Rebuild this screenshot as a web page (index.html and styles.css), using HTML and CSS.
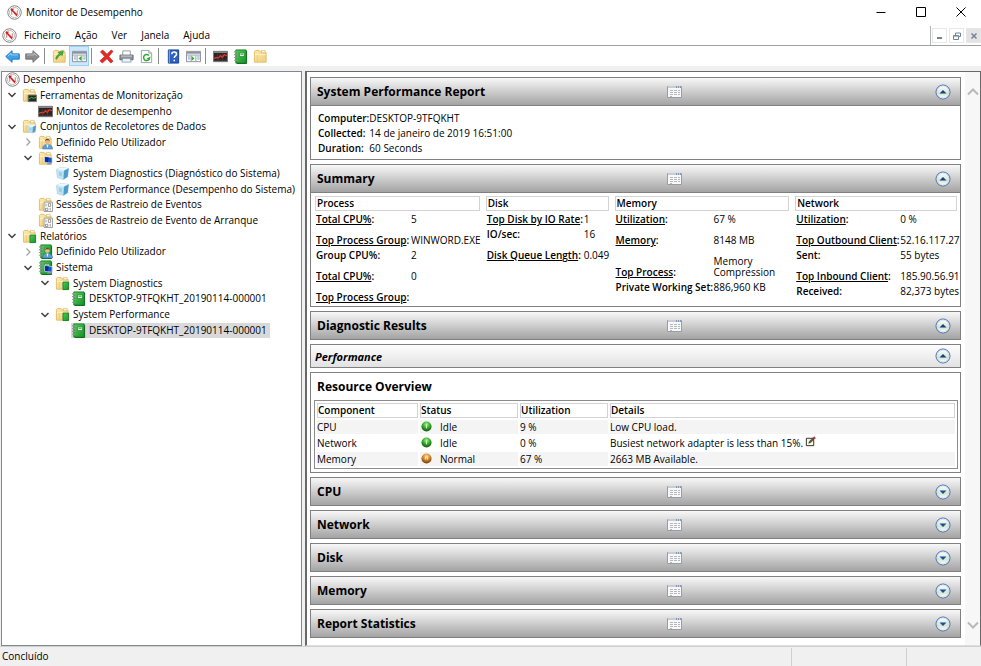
FILE: index.html
```html
<!DOCTYPE html>
<html lang="pt">

<head>
  <meta charset="UTF-8">
  <meta name="viewport" content="width=device-width, initial-scale=1.0">
  <title>Monitor de Desempenho</title>
  <link rel="stylesheet" href="styles.css">
</head>

<body>
  <svg class="defs" aria-hidden="true">
    <defs>
      <linearGradient id="gFolder" x1="0" y1="0" x2="1" y2="1">
        <stop offset="0" stop-color="#fdebb0" />
        <stop offset="1" stop-color="#f0cd78" />
      </linearGradient>
      <linearGradient id="gGreen" x1="0" y1="0" x2="1" y2="1">
        <stop offset="0" stop-color="#55c95c" />
        <stop offset="1" stop-color="#149428" />
      </linearGradient>
      <linearGradient id="gRound" x1="0" y1="0" x2="0" y2="1">
        <stop offset="0" stop-color="#ffffff" />
        <stop offset="0.6" stop-color="#d5e6cd" />
        <stop offset="1" stop-color="#ffffff" />
      </linearGradient>
      <radialGradient id="gIdle" cx="0.5" cy="0.3" r="0.7">
        <stop offset="0" stop-color="#a8f59a" />
        <stop offset="0.5" stop-color="#2fae28" />
        <stop offset="1" stop-color="#144f12" />
      </radialGradient>
      <radialGradient id="gNormal" cx="0.5" cy="0.3" r="0.7">
        <stop offset="0" stop-color="#ffe0a0" />
        <stop offset="0.5" stop-color="#d98427" />
        <stop offset="1" stop-color="#6b3508" />
      </radialGradient>
    </defs>
    <symbol id="perf" viewBox="0 0 16 16">
      <circle cx="8" cy="8" r="7.200" fill="#fff" stroke="#6f6f6f" stroke-width="0.9" />
      <circle cx="8" cy="8" r="5.400" fill="#fff" stroke="#a5a5a5" stroke-width="0.8" />
      <path d="M5 5.500v5M11 10V5.500" fill="none" stroke="#e08a8a" stroke-width="1.200" />
      <path d="M5 4l6.500 6.500-1.500 1.500L5 6z" fill="#d92020" />
      <path d="M4 3.800l3.800.2L4.500 7z" fill="#d92020" />
    </symbol>
    <symbol id="folder" viewBox="0 0 16 16">
      <path d="M1.500 14V2.500l1-1h4l1 1.500h5.500l1 1V14z" fill="url(#gFolder)" stroke="#e0bc68" />
      <path d="M9 1.500h4v2.500H9z" fill="#fff8dc" stroke="#cfae62" stroke-width="0.6" />
      <path d="M2 6h11.500" stroke="#fff4cc" />
      <path d="M4.500 6.500v7" stroke="#e6c06a" stroke-width="0.7" />
    </symbol>
    <symbol id="monitor" viewBox="0 0 16 16">
      <path d="M0.500 2.500h15v11h-15z" fill="#2b2525" stroke="#777" />
      <path d="M1 3.500h14" stroke="#a9a9a9" />
      <path d="M1 10l3-1 2 .5L8 7l2 2 2-3 3 1" fill="none" stroke="#e83a2c" stroke-width="1.300" />
      <path d="M1 12h14M5 5v8M10 5v8" stroke="#6a4444" stroke-width="0.5" />
    </symbol>
    <symbol id="book" viewBox="0 0 16 16">
      <path d="M3 1h11v14H3z" fill="url(#gGreen)" stroke="#168325" />
      <path d="M14.500 2v13.500H4" fill="none" stroke="#0d651a" />
      <path d="M7 4h5v4H7z" fill="#e5f8df" stroke="#198228" stroke-width="0.7" />
      <path d="M8 5.500h3" stroke="#178027" />
      <path d="M1 3h4M1 6h4M1 9h4M1 12h4" stroke="#8f9a90" stroke-width="1.200" />
    </symbol>
    <symbol id="cube" viewBox="0 0 16 16">
      <path d="M1.500 3.500L6 1.500l8.500 1-1 9-4.500 3-6.500-2z" fill="#c4e4f3" stroke="#9fcbe0" stroke-width="0.6" />
      <path d="M1.500 3.500L6 1.500l8.500 1L9.500 5z" fill="#eef8fc" />
      <path d="M9.500 5l5-2.500-1 9-4.500 3z" fill="#4b9dcb" />
      <path d="M4 6l3.500.6v4.600L4.500 10.500z" fill="#9ccfe8" />
    </symbol>
    <symbol id="user" viewBox="0 0 16 16">
      <circle cx="10" cy="7" r="2.600" fill="#eab78a" />
      <path d="M7.500 7c-.5-4 5.500-4 5 0l-1-1.500H8.500z" fill="#6d4426" />
      <path d="M5 15c0-4 2.500-5 5-5s5.500 1 5.500 5z" fill="#5d9fd8" stroke="#2e6ca8" stroke-width="0.5" />
      <path d="M9 10l1 4 1.200-4z" fill="#fff" />
    </symbol>
    <symbol id="screen" viewBox="0 0 16 16">
      <path d="M7 6l8 1v6l-8-1z" fill="#1653cc" stroke="#c9d6e6" stroke-width="0.8" />
      <path d="M7.500 6.500l4 .5-1 5-3-.5z" fill="#0a2b97" />
      <path d="M9 14.500h6l-2-2h-2z" fill="#8a9bb0" />
    </symbol>
    <symbol id="sheet" viewBox="0 0 16 16">
      <path d="M6.500 5.500h9v10h-9z" fill="#fff" stroke="#9a9a9a" />
      <path d="M8.500 7v3M11 7h2.500v3H11zM8 12h2.500v2.500H8zM13 11.500v3" fill="none" stroke="#777" stroke-width="0.8" />
    </symbol>
    <symbol id="f-monitor" viewBox="0 0 16 16">
      <use href="#folder" />
      <path d="M6.500 7.500h9v7h-9z" fill="#232b23" stroke="#777" />
      <path d="M7 12l3-2 2 1 3-1" fill="none" stroke="#41c147" />
    </symbol>
    <symbol id="f-cube" viewBox="0 0 16 16">
      <use href="#folder" />
      <use href="#cube" x="5" y="5" width="11" height="11" />
    </symbol>
    <symbol id="f-user" viewBox="0 0 16 16">
      <use href="#folder" />
      <use href="#user" />
    </symbol>
    <symbol id="f-screen" viewBox="0 0 16 16">
      <use href="#folder" />
      <use href="#screen" />
    </symbol>
    <symbol id="f-sheet" viewBox="0 0 16 16">
      <use href="#folder" />
      <use href="#sheet" />
    </symbol>
    <symbol id="f-book" viewBox="0 0 16 16">
      <use href="#folder" />
      <path d="M8.500 6.500h6v8h-6z" fill="url(#gGreen)" stroke="#168325" />
    </symbol>
    <symbol id="b-user" viewBox="0 0 16 16">
      <use href="#book" />
      <use href="#user" />
    </symbol>
    <symbol id="b-screen" viewBox="0 0 16 16">
      <use href="#book" />
      <use href="#screen" />
    </symbol>
    <symbol id="arrow" viewBox="0 0 16 16">
      <path d="M0.800 8l6.700-6.200v3.400h7.700v5.600H7.500v3.400z" stroke-linejoin="round" />
      <path d="M3 7.500l3.500-3v1.800H14" fill="none" stroke="#fff" stroke-opacity="0.5" />
    </symbol>
    <symbol id="up" viewBox="0 0 16 16">
      <use href="#folder" />
      <path d="M4 10c1-3 2-4 4-5L6.500 3.500 12 2l-1 5-1.500-1C7.500 7 6 9 5 11z" fill="#3fb53d" stroke="#247e25" stroke-width="0.6" />
    </symbol>
    <symbol id="panel" viewBox="0 0 16 16">
      <path d="M0.500 2.500h15v11h-15z" fill="#f7f9fb" stroke="#8a8f96" />
      <path d="M1 4h14" stroke="#8a939f" stroke-width="2" />
      <path d="M1 6.500h14M5.500 7v6M10.500 7v6" stroke="#9da3aa" />
      <path d="M2 8.500h2.500M2 10.500h2.500M12 8.500h2.500M12 10.500h2.500" stroke="#7ba2c9" />
    </symbol>
    <symbol id="delete" viewBox="0 0 16 16">
      <path d="M1.500 3L4 1l4.500 4.500L13 1l2 1.500L10.500 8l4.500 5-2.500 2-4-4.500-5 4.500L1 12.500 6 8z" fill="#df2c25" stroke="#b51712" stroke-width="0.6" />
    </symbol>
    <symbol id="print" viewBox="0 0 16 16">
      <path d="M4 2h8v5H4z" fill="#fff" stroke="#999" />
      <path d="M1 6.500h14v5H1z" fill="#8e949a" stroke="#61666b" />
      <path d="M2 7.500h12" stroke="#d7dadd" />
      <path d="M4 10h8l1 4H3z" fill="#e6f1fb" stroke="#7c8ea1" stroke-width="0.7" />
    </symbol>
    <symbol id="refresh" viewBox="0 0 16 16">
      <path d="M2.500 1.500h8l3 3v10h-11z" fill="#fff" stroke="#9aa0a6" />
      <path d="M10.500 1.500v3h3" fill="none" stroke="#9aa0a6" />
      <path d="M10.500 7a3.200 3.200 0 1 0 .5 3.500" fill="none" stroke="#2ea836" stroke-width="1.600" />
      <path d="M12.500 8l-1.300 4L8 10z" fill="#2ea836" />
    </symbol>
    <symbol id="help" viewBox="0 0 16 16">
      <path d="M2.500 1h11v14h-11z" fill="#2b62c4" stroke="#153b8c" />
      <path d="M3.500 1v14" stroke="#8fb4ef" />
      <path d="M6.200 5.500c0-3 5-3 5 0 0 2-2.400 1.800-2.400 4M8.800 11.500v1.500" fill="none" stroke="#fff" stroke-width="1.600" />
    </symbol>
    <symbol id="grid" viewBox="0 0 16 14">
      <path d="M1.500 1.500h14v11h-14z" fill="#f7f8fa" stroke="#989da3" />
      <path d="M2 2h13" stroke="#c8cdd4" stroke-width="2" />
      <path d="M10 2h1M12 2h1M14 2h1" stroke="#46628e" stroke-width="1" />
      <path d="M4 5.500h3M8 5.500h3M12 5.500h2M4 7.500h3M8 7.500h3M12 7.500h2M4 9.500h3M8 9.500h3M12 9.500h2M4 11.500h2" stroke="#b4b8bd" />
    </symbol>
    <symbol id="round-up" viewBox="0 0 16 16">
      <circle cx="8" cy="8" r="7" fill="url(#gRound)" stroke="#4668ac" />
      <circle cx="8" cy="8" r="6" fill="none" stroke="#c4daf5" stroke-width="0.8" />
      <path d="M4.500 9.500L8 6l3.500 3.500z" fill="#143f8c" />
    </symbol>
    <symbol id="round-down" viewBox="0 0 16 16">
      <circle cx="8" cy="8" r="7" fill="url(#gRound)" stroke="#4668ac" />
      <circle cx="8" cy="8" r="6" fill="none" stroke="#c4daf5" stroke-width="0.8" />
      <path d="M4.500 6.500L8 10l3.500-3.500z" fill="#174da5" />
    </symbol>
    <symbol id="open" viewBox="0 0 10 10">
      <path d="M1.500 3L5 6.500 8.500 3" fill="none" stroke="#404040" stroke-width="1.500" />
    </symbol>
    <symbol id="closed" viewBox="0 0 10 10">
      <path d="M3.500 1.500L7 5 3.500 8.500" fill="none" stroke="#a0a0a0" stroke-width="1.200" />
    </symbol>
    <symbol id="note" viewBox="0 0 12 12">
      <path d="M1.500 2.500h8v8h-8z" fill="#fffbd6" stroke="#222" />
      <path d="M4 8l1-2.500L10 .8l1.300 1.200L6.500 7z" fill="#555" stroke="#333" stroke-width="0.5" />
      <path d="M9.500 1.500L11 3" stroke="#e33" stroke-width="1.600" />
    </symbol>
  </svg>

  <div class="window">
    <header class="titlebar">
      <svg class="icon"><use href="#perf" /></svg>
      <h1>Monitor de Desempenho</h1>
      <div class="winbtns">
        <button type="button" aria-label="Minimizar"><svg viewBox="0 0 10 10"><path d="M0.500 5.500h9" /></svg></button>
        <button type="button" aria-label="Maximizar"><svg viewBox="0 0 10 10"><path d="M0.500 0.500h9v9h-9z" /></svg></button>
        <button type="button" aria-label="Fechar"><svg viewBox="0 0 10 10"><path d="M0.500 0.500l9 9M9.500 0.500l-9 9" /></svg></button>
      </div>
    </header>

    <nav class="menubar">
      <svg class="icon"><use href="#perf" /></svg>
      <button type="button">Ficheiro</button>
      <button type="button">Ação</button>
      <button type="button">Ver</button>
      <button type="button">Janela</button>
      <button type="button">Ajuda</button>
      <div class="childbtns">
        <button type="button" aria-label="Minimizar janela"><svg viewBox="0 0 8 8"><path d="M1 6h5" stroke-width="2" /></svg></button>
        <button type="button" aria-label="Restaurar janela"><svg viewBox="0 0 8 8"><path d="M2.500 3V1h5v3.500H6M0.500 3.500h5v4h-5zM0.500 4h5" /></svg></button>
        <button type="button" class="off" aria-label="Fechar janela"><svg viewBox="0 0 8 8"><path d="M1.500 1.500l5 5M6.500 1.500l-5 5" stroke-width="1.500" /></svg></button>
      </div>
    </nav>

    <div class="toolbar">
      <button type="button" aria-label="Retroceder"><svg class="icon back"><use href="#arrow" /></svg></button>
      <button type="button" aria-label="Avançar"><svg class="icon forward" viewBox="0 0 16 16"><use href="#arrow" transform="translate(16 0) scale(-1 1)" /></svg></button>
      <span class="sep"></span>
      <button type="button" aria-label="Subir um nível"><svg class="icon"><use href="#up" /></svg></button>
      <button type="button" class="pressed" aria-label="Mostrar árvore"><svg class="icon" viewBox="0 0 16 16"><use href="#panel" /><path d="M10 7.500v5L7 10z" fill="#2ea836" /></svg></button>
      <span class="sep"></span>
      <button type="button" aria-label="Eliminar"><svg class="icon"><use href="#delete" /></svg></button>
      <button type="button" aria-label="Imprimir"><svg class="icon"><use href="#print" /></svg></button>
      <button type="button" aria-label="Atualizar"><svg class="icon"><use href="#refresh" /></svg></button>
      <span class="sep"></span>
      <button type="button" aria-label="Ajuda"><svg class="icon"><use href="#help" /></svg></button>
      <button type="button" aria-label="Mostrar painel de ações"><svg class="icon" viewBox="0 0 16 16"><use href="#panel" /><path d="M6 7.500v5L9 10z" fill="#2ea836" /></svg></button>
      <span class="sep"></span>
      <button type="button" aria-label="Ver monitor"><svg class="icon"><use href="#monitor" /></svg></button>
      <button type="button" aria-label="Ver relatório"><svg class="icon"><use href="#book" /></svg></button>
      <button type="button" aria-label="Ver pasta"><svg class="icon"><use href="#folder" /></svg></button>
    </div>

    <div class="panes">
      <aside class="side">
        <ul class="tree">
          <li class="l0"><svg class="icon"><use href="#perf" /></svg><a href="#">Desempenho</a></li>
          <li class="l1"><button type="button" aria-label="Fechar ramo"><svg><use href="#open" /></svg></button><svg class="icon"><use href="#f-monitor" /></svg><a href="#">Ferramentas de Monitorização</a></li>
          <li class="l2 leaf"><svg class="icon"><use href="#monitor" /></svg><a href="#">Monitor de desempenho</a></li>
          <li class="l1"><button type="button" aria-label="Fechar ramo"><svg><use href="#open" /></svg></button><svg class="icon"><use href="#f-cube" /></svg><a href="#">Conjuntos de Recoletores de Dados</a></li>
          <li class="l2"><button type="button" aria-label="Abrir ramo"><svg><use href="#closed" /></svg></button><svg class="icon"><use href="#f-user" /></svg><a href="#">Definido Pelo Utilizador</a></li>
          <li class="l2"><button type="button" aria-label="Fechar ramo"><svg><use href="#open" /></svg></button><svg class="icon"><use href="#f-screen" /></svg><a href="#">Sistema</a></li>
          <li class="l3 leaf"><svg class="icon"><use href="#cube" /></svg><a href="#">System Diagnostics (Diagnóstico do Sistema)</a></li>
          <li class="l3 leaf"><svg class="icon"><use href="#cube" /></svg><a href="#">System Performance (Desempenho do Sistema)</a></li>
          <li class="l2 leaf"><svg class="icon"><use href="#f-sheet" /></svg><a href="#">Sessões de Rastreio de Eventos</a></li>
          <li class="l2 leaf"><svg class="icon"><use href="#f-sheet" /></svg><a href="#">Sessões de Rastreio de Evento de Arranque</a></li>
          <li class="l1"><button type="button" aria-label="Fechar ramo"><svg><use href="#open" /></svg></button><svg class="icon"><use href="#f-book" /></svg><a href="#">Relatórios</a></li>
          <li class="l2"><button type="button" aria-label="Abrir ramo"><svg><use href="#closed" /></svg></button><svg class="icon"><use href="#b-user" /></svg><a href="#">Definido Pelo Utilizador</a></li>
          <li class="l2"><button type="button" aria-label="Fechar ramo"><svg><use href="#open" /></svg></button><svg class="icon"><use href="#b-screen" /></svg><a href="#">Sistema</a></li>
          <li class="l3"><button type="button" aria-label="Fechar ramo"><svg><use href="#open" /></svg></button><svg class="icon"><use href="#f-book" /></svg><a href="#">System Diagnostics</a></li>
          <li class="l4 leaf"><svg class="icon"><use href="#book" /></svg><a href="#">DESKTOP-9TFQKHT_20190114-000001</a></li>
          <li class="l3"><button type="button" aria-label="Fechar ramo"><svg><use href="#open" /></svg></button><svg class="icon"><use href="#f-book" /></svg><a href="#">System Performance</a></li>
          <li class="l4 leaf active"><span><svg class="icon"><use href="#book" /></svg><a href="#">DESKTOP-9TFQKHT_20190114-000001</a></span></li>
        </ul>
      </aside>

      <main class="content">
        <div class="report">
          <section class="block">
            <div class="head">
              <h2>System Performance Report</h2>
              <button type="button" class="menu" aria-label="Menu"><svg><use href="#grid" /></svg></button>
              <button type="button" class="toggle" aria-label="Fechar"><svg><use href="#round-up" /></svg></button>
            </div>
            <table class="info">
              <tr><th>Computer:</th><td>DESKTOP-9TFQKHT</td></tr>
              <tr><th>Collected:</th><td>14 de janeiro de 2019 16:51:00</td></tr>
              <tr><th>Duration:</th><td>60 Seconds</td></tr>
            </table>
          </section>

          <section class="block">
            <div class="head">
              <h2>Summary</h2>
              <button type="button" class="menu" aria-label="Menu"><svg><use href="#grid" /></svg></button>
              <button type="button" class="toggle" aria-label="Fechar"><svg><use href="#round-up" /></svg></button>
            </div>
            <div class="summary">
              <div class="process">
                <h3>Process</h3>
                <table>
                  <tr><th><a href="#">Total CPU%</a>:</th><td>5</td></tr>
                  <tr class="group"><th><a href="#">Top Process Group</a>:</th><td>WINWORD.EXE</td></tr>
                  <tr><th>Group CPU%:</th><td>2</td></tr>
                  <tr class="group"><th><a href="#">Total CPU%</a>:</th><td>0</td></tr>
                  <tr class="group"><th><a href="#">Top Process Group</a>:</th><td></td></tr>
                </table>
              </div>
              <div class="disk">
                <h3>Disk</h3>
                <table>
                  <tr><th><a href="#">Top Disk by IO Rate</a>:</th><td>1</td></tr>
                  <tr><th>IO/sec:</th><td>16</td></tr>
                  <tr class="group"><th><a href="#">Disk Queue Length</a>:</th><td>0.049</td></tr>
                </table>
              </div>
              <div class="memory">
                <h3>Memory</h3>
                <table>
                  <tr><th><a href="#">Utilization</a>:</th><td>67 %</td></tr>
                  <tr class="group"><th><a href="#">Memory</a>:</th><td>8148 MB</td></tr>
                  <tr class="group"><th><a href="#">Top Process</a>:</th><td class="two">Memory<br>Compression</td></tr>
                  <tr><th>Private Working Set:</th><td>886,960 KB</td></tr>
                </table>
              </div>
              <div class="network">
                <h3>Network</h3>
                <table>
                  <tr><th><a href="#">Utilization</a>:</th><td>0 %</td></tr>
                  <tr class="group"><th><a href="#">Top Outbound Client</a>:</th><td>52.16.117.27</td></tr>
                  <tr><th>Sent:</th><td>55 bytes</td></tr>
                  <tr class="group"><th><a href="#">Top Inbound Client</a>:</th><td>185.90.56.91</td></tr>
                  <tr><th>Received:</th><td>82,373 bytes</td></tr>
                </table>
              </div>
            </div>
          </section>

          <section class="block">
            <div class="head">
              <h2>Diagnostic Results</h2>
              <button type="button" class="menu" aria-label="Menu"><svg><use href="#grid" /></svg></button>
              <button type="button" class="toggle" aria-label="Fechar"><svg><use href="#round-up" /></svg></button>
            </div>
          </section>

          <section class="block">
            <div class="head sub">
              <h2>Performance</h2>
              <button type="button" class="toggle" aria-label="Fechar"><svg><use href="#round-up" /></svg></button>
            </div>
          </section>

          <section class="block overview">
            <h2>Resource Overview</h2>
            <table class="resources">
              <thead>
                <tr><th class="c1">Component</th><th class="c2">Status</th><th class="c3">Utilization</th><th>Details</th></tr>
              </thead>
              <tbody>
                <tr><td>CPU</td><td><svg class="led" viewBox="0 0 12 12"><circle cx="6" cy="6" r="5.500" fill="url(#gIdle)" /><path d="M6 4v4" stroke="#d9ffd2" /></svg>Idle</td><td>9 %</td><td>Low CPU load.</td></tr>
                <tr><td>Network</td><td><svg class="led" viewBox="0 0 12 12"><circle cx="6" cy="6" r="5.500" fill="url(#gIdle)" /><path d="M6 4v4" stroke="#d9ffd2" /></svg>Idle</td><td>0 %</td><td>Busiest network adapter is less than 15%.<svg class="note"><use href="#note" /></svg></td></tr>
                <tr><td>Memory</td><td><svg class="led" viewBox="0 0 12 12"><circle cx="6" cy="6" r="5.500" fill="url(#gNormal)" /><path d="M5 4v3M7 4v3" stroke="#ffeec8" /></svg>Normal</td><td>67 %</td><td>2663 MB Available.</td></tr>
              </tbody>
            </table>
          </section>

          <section class="block">
            <div class="head">
              <h2>CPU</h2>
              <button type="button" class="menu" aria-label="Menu"><svg><use href="#grid" /></svg></button>
              <button type="button" class="toggle" aria-label="Abrir"><svg><use href="#round-down" /></svg></button>
            </div>
          </section>
          <section class="block">
            <div class="head">
              <h2>Network</h2>
              <button type="button" class="menu" aria-label="Menu"><svg><use href="#grid" /></svg></button>
              <button type="button" class="toggle" aria-label="Abrir"><svg><use href="#round-down" /></svg></button>
            </div>
          </section>
          <section class="block">
            <div class="head">
              <h2>Disk</h2>
              <button type="button" class="menu" aria-label="Menu"><svg><use href="#grid" /></svg></button>
              <button type="button" class="toggle" aria-label="Abrir"><svg><use href="#round-down" /></svg></button>
            </div>
          </section>
          <section class="block">
            <div class="head">
              <h2>Memory</h2>
              <button type="button" class="menu" aria-label="Menu"><svg><use href="#grid" /></svg></button>
              <button type="button" class="toggle" aria-label="Abrir"><svg><use href="#round-down" /></svg></button>
            </div>
          </section>
          <section class="block">
            <div class="head">
              <h2>Report Statistics</h2>
              <button type="button" class="menu" aria-label="Menu"><svg><use href="#grid" /></svg></button>
              <button type="button" class="toggle" aria-label="Abrir"><svg><use href="#round-down" /></svg></button>
            </div>
          </section>
        </div>
        <div class="scroll">
          <button type="button" aria-label="Deslocar para cima"><svg viewBox="0 0 12 8"><path d="M1 6.500l5-5 5 5" /></svg></button>
          <button type="button" aria-label="Deslocar para baixo"><svg viewBox="0 0 12 8"><path d="M1 1.500l5 5 5-5" /></svg></button>
        </div>
      </main>
    </div>

    <footer class="status">
      <span>Concluído</span>
      <span class="part"></span>
      <span class="part"></span>
    </footer>
  </div>
</body>

</html>
```
FILE: styles.css
```css
* {
  margin: 0;
  padding: 0;
  box-sizing: border-box;
}

body {
  font: 10px/15px "Open Sans", "Noto Sans", sans-serif;
  color: #000;
  background: #f0f0f0;
}

ul {
  list-style: none;
}

a {
  color: inherit;
  text-decoration: none;
}

button {
  font: inherit;
  color: inherit;
  border: none;
  background: none;
}

svg {
  display: block;
  flex: none;
}

h1,
h2,
h3 {
  font-size: inherit;
}

table {
  border-collapse: collapse;
}

th {
  text-align: left;
  font-weight: 600;
}

.defs {
  position: absolute;
  width: 0;
  height: 0;
}

.icon {
  width: 15px;
  height: 15px;
}

.window {
  min-height: 100vh;
  display: flex;
  flex-direction: column;
}

/* title and menu */
.titlebar {
  height: 26px;
  display: flex;
  align-items: center;
  padding: 0 0 2px 7px;
  background: #fff;
}

.titlebar h1 {
  margin-left: 4px;
  font-weight: normal;
}

.winbtns {
  margin-left: auto;
  display: flex;
}

.winbtns button {
  width: 40px;
  height: 24px;
  display: flex;
  align-items: center;
  justify-content: center;
}

.winbtns svg {
  width: 10px;
  height: 10px;
  fill: none;
  stroke: #000;
}

.menubar {
  height: 20px;
  display: flex;
  align-items: center;
  padding-left: 2px;
  background: #fff;
  border-bottom: 1px solid #a0a0a0;
}

.menubar > button {
  padding: 0 7px;
}

.childbtns {
  align-self: stretch;
  margin-left: auto;
  padding-left: 1px;
  display: flex;
  align-items: center;
  gap: 2px;
  border-left: 1px solid #b4b4b4;
}

.childbtns button {
  width: 15px;
  height: 15px;
  display: flex;
  align-items: center;
  justify-content: center;
  border: 1px solid #e8e8e8;
}

.childbtns .off {
  background: #e3e3e3;
}

.childbtns svg {
  width: 8px;
  height: 8px;
  fill: none;
  stroke: #71839a;
}

/* toolbar */
.toolbar {
  height: 20px;
  display: flex;
  align-items: center;
  padding-left: 2px;
  background: #fff;
}

.toolbar button {
  width: 20px;
  height: 20px;
  display: flex;
  align-items: center;
  justify-content: center;
}

.toolbar .pressed {
  background: #cce8ff;
  border: 1px solid #99d1ff;
}

.back {
  fill: #3fa3e8;
  stroke: #1d72bd;
}

.forward {
  fill: #8d8d8d;
  stroke: #6e6e6e;
}

.sep {
  width: 1px;
  height: 16px;
  margin: 0 4px 0 2px;
  background: #8c8c8c;
}

/* panes */
.panes {
  flex: 1;
  display: flex;
  gap: 3px;
  padding: 5px 0 0 1px;
}

.side {
  width: 301px;
  background: #fff;
  border: 1px solid #828790;
}

.tree {
  height: 266px;
  display: grid;
  grid-auto-rows: 1fr;
}

.tree li {
  display: flex;
  align-items: center;
  white-space: nowrap;
}

.tree button {
  width: 18px;
  padding-left: 3px;
}

.tree button svg {
  width: 10px;
  height: 10px;
}

.tree a {
  margin-left: 3px;
}

.l0 {
  padding-left: 3px;
}

.l1 {
  padding-left: 2px;
}

.l2 {
  padding-left: 18px;
}

.l3 {
  padding-left: 35px;
}

.l4 {
  padding-left: 51px;
}

.leaf::before {
  content: "";
  width: 18px;
}

.active span {
  display: flex;
  align-items: center;
  padding-right: 3px;
  background: #d9d9d9;
}

.content {
  flex: 1;
  min-width: 0;
  display: flex;
  background: #fff;
  border: 1px solid #696969;
  border-left-width: 2px;
  border-bottom-color: #dcdcdc;
}

.report {
  flex: 1;
  min-width: 0;
  display: flex;
  flex-direction: column;
  gap: 4px;
  padding: 5px 4px 7px 3px;
}

.scroll {
  width: 15px;
  display: flex;
  flex-direction: column;
  justify-content: space-between;
  padding: 16px 0;
  background: #f7f7f7;
}

.scroll button {
  height: 8px;
  display: flex;
  justify-content: center;
}

.scroll svg {
  width: 12px;
  height: 8px;
  fill: none;
  stroke: #b9b9b9;
  stroke-width: 2;
}

/* report */
.block {
  border: 1px solid #808080;
}

.head {
  height: 27px;
  display: grid;
  grid-template-columns: 55% 1fr auto;
  align-items: center;
  padding: 0 9px 0 6px;
  background: linear-gradient(#f8f8f8, #a3a3a3);
}

.head + * {
  border-top: 1px solid #808080;
}

.head h2,
.overview h2 {
  font-size: 12px;
}

.head button {
  justify-self: start;
}

.head svg {
  width: 16px;
  height: 16px;
}

.head .menu svg {
  height: 14px;
}

.head.sub {
  height: 22px;
  padding-left: 4px;
  grid-template-columns: 1fr auto;
  background: linear-gradient(#fdfdfd, #e2e2e2);
}

.head.sub h2 {
  font-size: 11px;
  font-style: italic;
}

.info {
  width: 100%;
  border-collapse: separate;
  border-spacing: 0;
  padding: 5px 0 3px 7px;
}

.info th {
  width: 51px;
}

.summary {
  display: grid;
  grid-template-columns: 165fr 123fr 175fr 162fr;
  gap: 6px;
  padding: 3px 3px 1px 4px;
}

.summary h3 {
  height: 15px;
  line-height: 13px;
  margin-bottom: 1px;
  padding-left: 1px;
  font-weight: 600;
  border: 1px solid #d3d3d3;
}

.summary table {
  width: 100%;
  table-layout: fixed;
}

.summary th,
.summary td {
  white-space: nowrap;
  vertical-align: bottom;
}

.summary th {
  padding-left: 1px;
}

.summary th a {
  text-decoration: underline;
}

.summary .group > * {
  padding-top: 6px;
}

.summary .group .two {
  padding-top: 8px;
  padding-bottom: 2px;
  line-height: 11px;
}

.process th {
  width: 96px;
}

.disk th {
  width: 98px;
}

.memory th {
  width: 99px;
}

.network th {
  width: 105px;
}

.overview {
  padding: 5px 2px 3px 3px;
}

.overview h2 {
  padding-left: 3px;
  line-height: 18px;
  margin-bottom: 4px;
}

.resources {
  width: 100%;
  table-layout: fixed;
  border: 1px solid #8c8c8c;
  border-collapse: separate;
  border-spacing: 2px;
}

.resources th {
  height: 15px;
  line-height: 13px;
  border: 1px solid #d3d3d3;
}

.resources td {
  height: 14px;
  line-height: 14px;
}

.resources tr:nth-child(odd) td {
  background: #f4f4f4;
}

.c1 {
  width: 101px;
}

.c2 {
  width: 98px;
}

.c3 {
  width: 88px;
}

.led {
  display: inline-block;
  vertical-align: top;
  width: 11px;
  height: 11px;
  margin: 1px 8px 0 1px;
}

.note {
  display: inline-block;
  vertical-align: top;
  width: 11px;
  height: 11px;
  margin-left: 2px;
}

/* status bar */
.status {
  height: 20px;
  display: flex;
  align-items: center;
  padding-left: 2px;
  border-top: 1px solid #d0d0d0;
}

.status span:first-child {
  flex: 1;
}

.part {
  width: 115px;
  height: 18px;
  border-left: 1px solid #cfcfcf;
}

.part:last-child {
  width: 75px;
}
```
